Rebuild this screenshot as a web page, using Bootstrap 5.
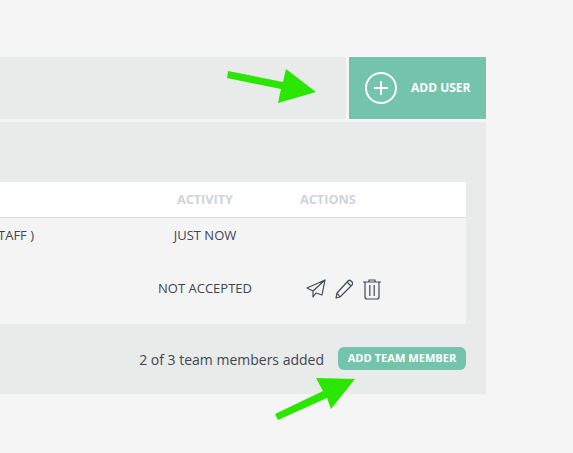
<!DOCTYPE html>
<html lang="en">
<head>
  <meta charset="UTF-8">
  <meta name="viewport" content="width=device-width, initial-scale=1.0">
  <title>Team members</title>
  <link href="https://cdn.jsdelivr.net/npm/bootstrap@5.3.3/dist/css/bootstrap.min.css" rel="stylesheet">
  <style>
    body {
      background: #f5f5f5;
      font-family: "Open Sans", sans-serif;
      color: #3f4650;
      overflow: hidden;
    }
    .page-wrap {
      width: 486px;
      padding-top: 57px;
    }
    .top-bar {
      height: 62px;
      gap: 3px;
    }
    .top-fill {
      background: #e9ebea;
    }
    .add-user {
      width: 137px;
      background: #73c4ab;
      color: #fff;
      font-size: 12px;
      font-weight: 700;
      border: 0;
      border-radius: 0;
      padding: 0 0 0 16px;
      gap: 14px;
    }
    .team-panel {
      background: #e9ebea;
      margin-top: 3px;
      height: 272px;
      padding: 60px 20px 0 0;
    }
    .team-table {
      table-layout: fixed;
      margin: 0;
      font-size: 13px;
      --bs-table-bg: #f4f4f4;
      --bs-table-color: #3f4650;
    }
    .team-table th {
      background: #fff;
      color: #ced4da;
      font-size: 12.7px;
      font-weight: 700;
      height: 35px;
      padding: 0;
      vertical-align: middle;
      border-bottom: 1px solid #dcdedf;
    }
    .team-table td {
      padding: 0;
      border: 0;
      vertical-align: middle;
    }
    .row-one {
      height: 37px;
    }
    .row-two {
      height: 70px;
    }
    .col-first { width: 140px; }
    .col-activity { width: 130px; }
    .col-actions { padding-left: 30px !important; }
    .role-cut {
      display: block;
      margin-left: -2px;
    }
    .team-foot {
      gap: 14px;
      padding-top: 24px;
      font-size: 14px;
    }
    .team-foot .add-member {
      margin-top: -1px;
    }
    .add-member {
      background: #73c4ab;
      color: #fff;
      border: 0;
      border-radius: 6px;
      width: 128px;
      height: 23px;
      padding: 0;
      font-size: 11.1px;
      font-weight: 700;
    }
    .row-icons {
      gap: 9px;
      padding-left: 36px;
    }
    .icon-trash {
      margin-left: 1px;
    }
    .arrow-layer {
      position: absolute;
      left: 0;
      top: 0;
      pointer-events: none;
    }
  </style>
</head>
<body>
<div class="page-wrap">
  <div class="top-bar d-flex">
    <div class="top-fill flex-grow-1"></div>
    <button class="add-user btn d-flex align-items-center">
      <svg width="32" height="32" viewBox="0 0 32 32" fill="none" stroke="#fff" stroke-width="2">
        <circle cx="16" cy="16" r="15"/>
        <path d="M16 9v14M9 16h14"/>
      </svg>
      ADD USER
    </button>
  </div>
  <div class="team-panel">
    <table class="team-table table">
      <thead>
        <tr>
          <th class="col-first"></th>
          <th class="col-activity text-center">ACTIVITY</th>
          <th class="col-actions">ACTIONS</th>
        </tr>
      </thead>
      <tbody>
        <tr class="row-one">
          <td><span class="role-cut">TAFF )</span></td>
          <td class="text-center">JUST NOW</td>
          <td></td>
        </tr>
        <tr class="row-two">
          <td></td>
          <td class="text-center">NOT ACCEPTED</td>
          <td>
            <div class="row-icons d-flex align-items-center">
              <svg width="20" height="20" viewBox="0 0 20 20" fill="none" stroke="#444b52" stroke-width="1.2" stroke-linejoin="round">
                <path d="M19 1 1 9l6 3L19 1l-3 15-6-2-3 4v-6"/>
              </svg>
              <svg width="18" height="20" viewBox="0 0 18 20" fill="none" stroke="#444b52" stroke-width="1.2" stroke-linejoin="round">
                <path d="M1 19l1-5L13 2c1-1 2-1 3 0l1 1c1 1 1 2 0 3L5 18zM2 14l3 4M12 3l4 4"/>
              </svg>
              <svg class="icon-trash" width="18" height="21" viewBox="0 0 18 21" fill="none" stroke="#444b52" stroke-width="1.2">
                <path d="M0 3h18M6 3V1h6v2M2 3v15c0 1 1 2 2 2h10c1 0 2-1 2-2V3M6.800 6v11M11.200 6v11"/>
              </svg>
            </div>
          </td>
        </tr>
      </tbody>
    </table>
    <div class="team-foot d-flex justify-content-end align-items-center">
      <span>2 of 3 team members added</span>
      <button class="add-member btn">ADD TEAM MEMBER</button>
    </div>
  </div>
</div>
<svg class="arrow-layer" width="573" height="453" viewBox="0 0 573 453" fill="#2ae600">
  <polygon points="228,71 283,82 286,69 316,92 278,103 281,89 227,78"/>
  <polygon points="275,414 323,391 316,378 355,379 331,409 327,398 278,420"/>
</svg>
</body>
</html>
